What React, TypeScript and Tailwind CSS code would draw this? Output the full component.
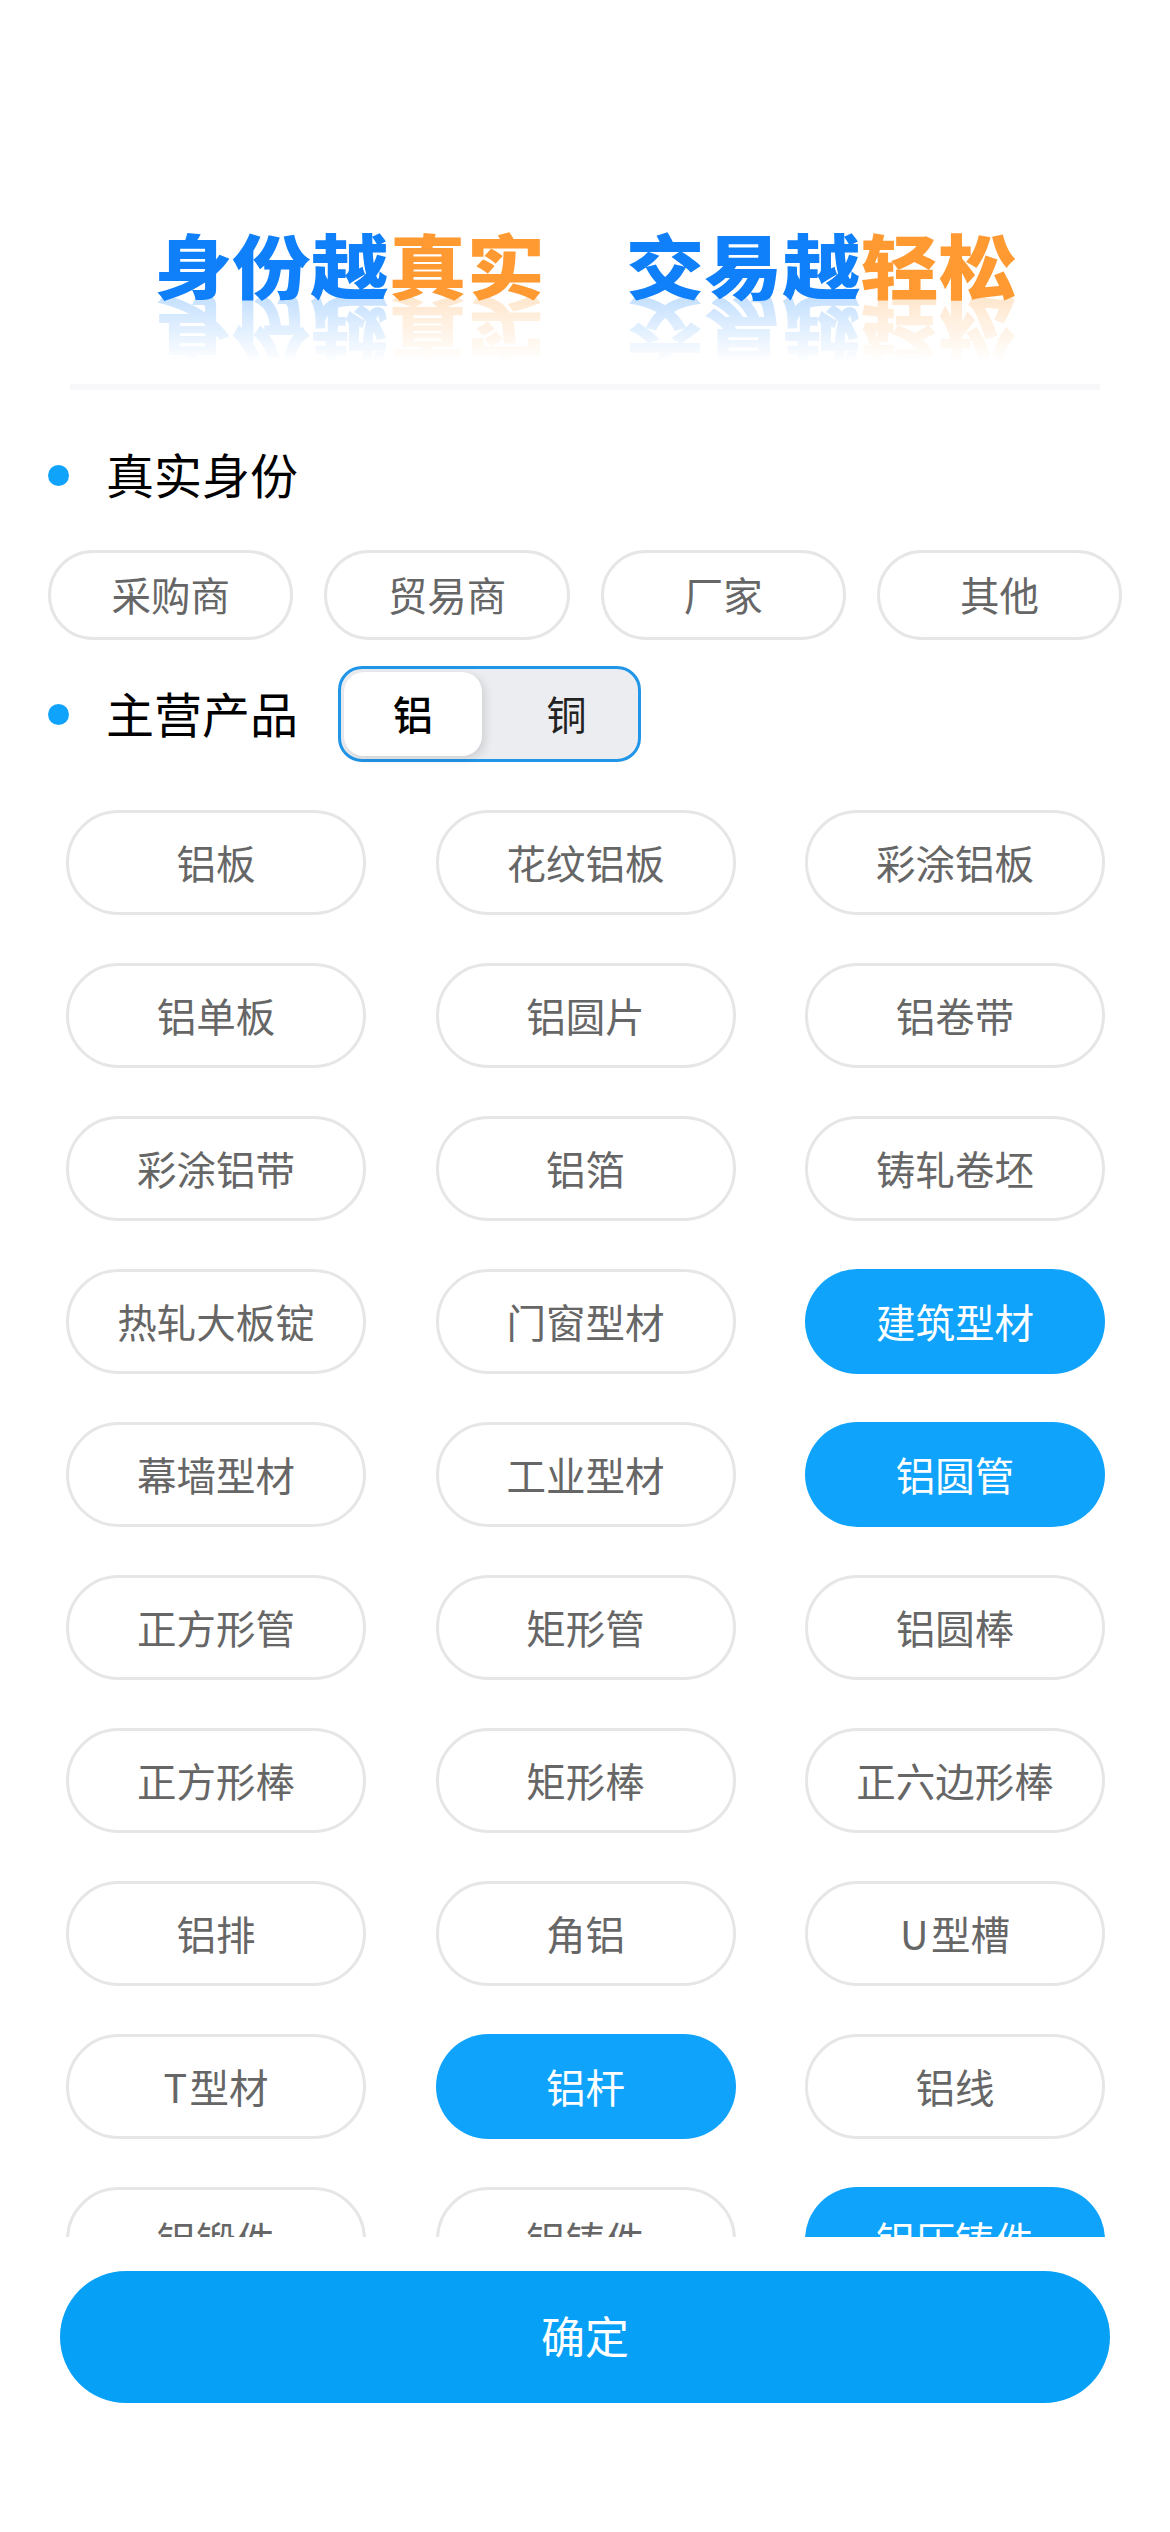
const font = "font-['Noto_Sans_CJK_SC','Noto_Sans',sans-serif]";

const identities = ['采购商', '贸易商', '厂家', '其他'];

const products = [
  { name: '铝板' }, { name: '花纹铝板' }, { name: '彩涂铝板' },
  { name: '铝单板' }, { name: '铝圆片' }, { name: '铝卷带' },
  { name: '彩涂铝带' }, { name: '铝箔' }, { name: '铸轧卷坯' },
  { name: '热轧大板锭' }, { name: '门窗型材' }, { name: '建筑型材', active: true },
  { name: '幕墙型材' }, { name: '工业型材' }, { name: '铝圆管', active: true },
  { name: '正方形管' }, { name: '矩形管' }, { name: '铝圆棒' },
  { name: '正方形棒' }, { name: '矩形棒' }, { name: '正六边形棒' },
  { name: '铝排' }, { name: '角铝' }, { name: 'U\u200a型槽' },
  { name: 'T\u200a型材' }, { name: '铝杆', active: true }, { name: '铝线' },
  { name: '铝锻件' }, { name: '铝铸件' }, { name: '铝压铸件', active: true },
];

function Slogan({ blue, orange }: { blue: string; orange: string }) {
  const line = (
    <>
      <span className="text-[#0f7ffa]">{blue}</span>
      <span className="text-[#ff9a33]">{orange}</span>
    </>
  );
  return (
    <div className="relative h-[80px] w-[385px]">
      <div className="origin-bottom scale-x-[1.015] scale-y-[0.92] text-[77px] leading-[80px] font-black whitespace-nowrap">{line}</div>
      <div className="absolute left-0 top-[71px] scale-x-[1.015] -scale-y-[0.92] text-[77px] leading-[80px] font-black whitespace-nowrap opacity-25 [mask-image:linear-gradient(to_bottom,transparent_8%,black_100%)]">
        {line}
      </div>
    </div>
  );
}

function SectionTitle({ children }: { children: string }) {
  return (
    <div className="flex items-center">
      <span className="h-[21px] w-[21px] rounded-full bg-[#10a3fb]" />
      <span className="ml-[37px] pb-[4px] text-[48px] leading-[56px] text-black">{children}</span>
    </div>
  );
}

export default function App() {
  return (
    <div className={`${font} flex h-[2532px] w-[1170px] flex-col overflow-hidden bg-white`}>
      <div className="flex justify-center gap-[87px] pt-[220px]">
        <Slogan blue="身份越" orange="真实" />
        <Slogan blue="交易越" orange="轻松" />
      </div>
      <div className="mx-[70px] mt-[84px] h-[6px] bg-[#f8f8fa]" />

      <div className="mt-[55px] px-[48px]">
        <SectionTitle>真实身份</SectionTitle>
        <div className="mt-[45px] flex gap-[31px]">
          {identities.map((item) => (
            <div
              key={item}
              className="flex h-[90px] w-[246px] items-center justify-center rounded-full border-[3px] border-[#e6e6e6] pb-[2px] text-[39.5px] text-[#666666]"
            >
              {item}
            </div>
          ))}
        </div>

        <div className="mt-[26px] flex items-center">
          <SectionTitle>主营产品</SectionTitle>
          <div className="ml-[40px] flex h-[96px] w-[303px] rounded-[24px] border-[3px] border-[#2196e8] bg-[#ecedf0] p-[3px] text-[40px]">
            <div className="flex w-[138px] items-center justify-center rounded-[20px] bg-white pb-[2px] font-medium text-black shadow-[3px_3px_10px_rgba(0,0,0,0.13)]">
              铝
            </div>
            <div className="flex flex-1 items-center justify-center pb-[2px] pl-[16px] text-[#222222]">铜</div>
          </div>
        </div>
      </div>

      <div className="mt-[48px] h-[1427px] overflow-hidden px-[66px]">
        <div className="grid grid-cols-[300px_300px_300px] gap-x-[69.5px] gap-y-[48px]">
          {products.map((p) => (
            <div
              key={p.name}
              className={
                p.active
                  ? 'flex h-[105px] items-center justify-center rounded-full bg-[#10a3fb] pb-[2px] text-[39.5px] text-white'
                  : 'flex h-[105px] items-center justify-center rounded-full border-[3px] border-[#e6e6e6] pb-[2px] text-[39.5px] text-[#666666]'
              }
            >
              {p.name}
            </div>
          ))}
        </div>
      </div>

      <div className="mx-[60px] mt-[34px] flex h-[132px] items-center justify-center rounded-full bg-[#06a0f7] pb-[4px] text-[44px] text-white">
        确定
      </div>
    </div>
  );
}
